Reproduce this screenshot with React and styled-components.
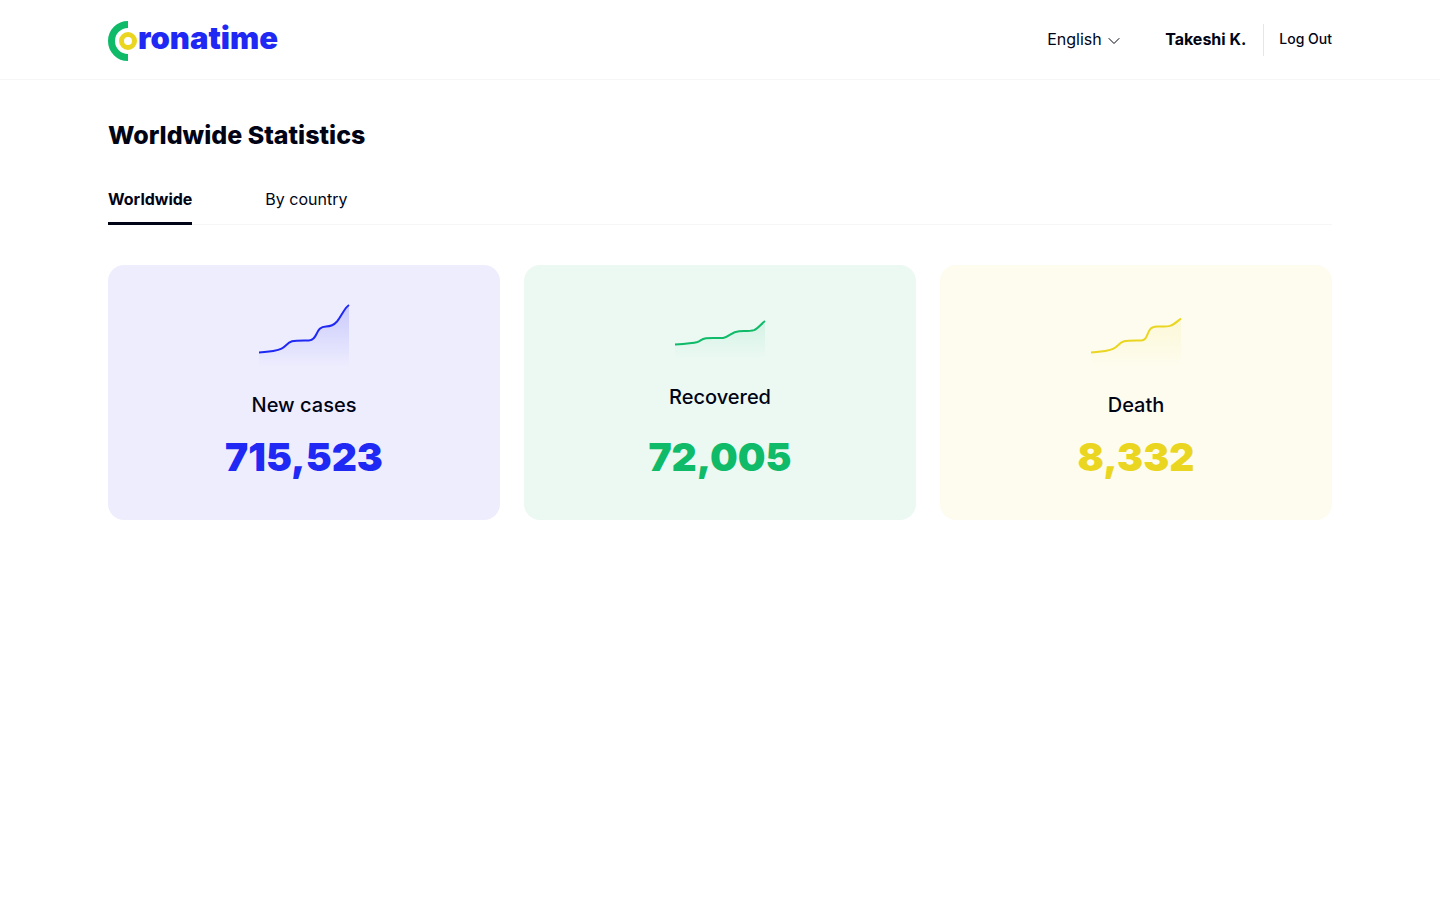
import React from "react";
import styled, { createGlobalStyle } from "styled-components";

const GlobalStyle = createGlobalStyle`
  * { box-sizing: border-box; }
  body {
    margin: 0;
    background: #ffffff;
    color: #010414;
    font-family: Inter, "Liberation Sans", sans-serif;
    font-size: 16px;
    line-height: 20px;
  }
`;

const Header = styled.header`
  display: flex;
  align-items: center;
  justify-content: space-between;
  height: 80px;
  padding: 0 108px;
  border-bottom: 1px solid #f6f6f7;
`;

const LogoLink = styled.a`
  display: flex;
  align-items: center;
  padding-top: 2px;
  color: #2029f3;
  text-decoration: none;
`;

const LogoMark = styled.svg`
  display: block;
  width: 30px;
  height: 40px;
`;

const LogoText = styled.span`
  padding-bottom: 6px;
  font-size: 31px;
  font-weight: 900;
  line-height: 36px;
`;

const Actions = styled.div`
  display: flex;
  align-items: center;
`;

const Language = styled.label`
  display: grid;
  align-items: center;
  margin-right: 44px;
  > * { grid-area: 1 / 1; }
`;

const LanguageSelect = styled.select`
  appearance: none;
  margin: 0;
  padding: 0 19px 2px 0;
  border: 0;
  background: transparent;
  color: inherit;
  font: inherit;
  cursor: pointer;
`;

const Chevron = styled.svg`
  justify-self: end;
  width: 14px;
  height: 8px;
  margin-top: 2px;
  pointer-events: none;
`;

const UserName = styled.span`
  padding: 0 17px 2px 0;
  font-weight: 700;
`;

const LogOut = styled.button`
  height: 32px;
  padding: 0 0 2px 15px;
  border: 0;
  border-left: 1px solid #e6e6e7;
  background: transparent;
  color: inherit;
  font: 500 14px / 20px Inter, "Liberation Sans", sans-serif;
  cursor: pointer;
`;

const Main = styled.main`
  padding: 40px 108px;
`;

const Title = styled.h1`
  margin: 0 0 39px;
  font-size: 25px;
  font-weight: 800;
  line-height: 30px;
`;

const Tabs = styled.nav`
  display: flex;
  gap: 73px;
  margin-bottom: 40px;
  box-shadow: inset 0 -1px #f6f6f7;
`;

const Tab = styled.a`
  height: 36px;
  border-bottom: 3px solid ${(p) => (p.$active ? "#010414" : "transparent")};
  color: inherit;
  font-weight: ${(p) => (p.$active ? 700 : 400)};
  text-decoration: none;
`;

const Cards = styled.section`
  display: grid;
  grid-template-columns: repeat(3, 1fr);
  gap: 24px;
`;

const Card = styled.article`
  display: flex;
  flex-direction: column;
  align-items: center;
  padding: 40px;
  border-radius: 16px;
  background: ${(p) => p.$background};
`;

const Chart = styled.svg`
  display: block;
  width: 90px;
  height: ${(p) => p.$height}px;
  margin-bottom: 24px;
  overflow: visible;
`;

const CardLabel = styled.h2`
  margin: 0;
  font-size: 20px;
  font-weight: 500;
  line-height: 24px;
`;

const CardValue = styled.strong`
  margin-top: auto;
  padding-top: 16px;
  color: ${(p) => p.$color};
  font-size: 39px;
  font-weight: 900;
  line-height: 47px;
`;

const stats = [
  {
    id: "new",
    label: "New cases",
    value: "715,523",
    color: "#2029f3",
    background: "#eeedfe",
    height: 64,
    base: 62,
    line: "M0 47.5C8 47 18 46 22.5 43.7C27 41.3 28 38 33 36.3C38 35.2 45 35.6 50 35.4C59 35.4 56 21.5 67 21.4C72 21.4 74.5 20.5 78 16.5C83 10.5 85 3.5 90 0",
  },
  {
    id: "recovered",
    label: "Recovered",
    value: "72,005",
    color: "#0fba68",
    background: "#ecf9f3",
    height: 56,
    base: 54,
    line: "M0 39.5C8 39 18 38.3 22.5 37C26 35.8 26 34 31 33.3C37 32.8 43 33.4 48 32.9C55 31.9 56 26.7 64 26.2C69 25.9 75 26.3 79 25.1C83 23.5 86 19 90 16",
  },
  {
    id: "death",
    label: "Death",
    value: "8,332",
    color: "#ead621",
    background: "#fefcee",
    height: 64,
    base: 62,
    line: "M0 47.5C8 47 18 46 22.5 43.7C27 41.3 28 38 33 36.3C38 35.2 45 35.6 50 35.4C59 35.4 54 21.5 66 21.4C71 21.3 75 21.9 79 20.9C83 19.7 86 16.5 90 13.5",
  },
];

function StatCard({ id, label, value, color, background, height, base, line }) {
  return (
    <Card $background={background}>
      <Chart $height={height} viewBox={`0 0 90 ${height}`} aria-hidden="true">
        <defs>
          <linearGradient id={`fade-${id}`} x1="0" y1="0" x2="0" y2="1">
            <stop offset="0" stopColor={color} stopOpacity={id === "new" ? 0.18 : 0.11} />
            <stop offset="1" stopColor={color} stopOpacity="0" />
          </linearGradient>
        </defs>
        <path d={`${line}V${base}H0Z`} fill={`url(#fade-${id})`} />
        <path d={line} fill="none" stroke={color} strokeWidth="2" />
      </Chart>
      <CardLabel>{label}</CardLabel>
      <CardValue $color={color}>{value}</CardValue>
    </Card>
  );
}

export default function App() {
  return (
    <>
      <GlobalStyle />
      <Header>
        <LogoLink href="#" aria-label="Coronatime">
          <LogoMark viewBox="0 0 30 40" aria-hidden="true">
            <path d="M20 3.5A16.5 16.5 0 0 0 20 36.5" fill="none" stroke="#0fba68" strokeWidth="7" />
            <circle cx="20" cy="20" r="6.5" fill="none" stroke="#ead621" strokeWidth="5" />
          </LogoMark>
          <LogoText>ronatime</LogoText>
        </LogoLink>
        <Actions>
          <Language>
            <LanguageSelect aria-label="Language" defaultValue="en">
              <option value="en">English</option>
            </LanguageSelect>
            <Chevron viewBox="0 0 14 8" aria-hidden="true">
              <path d="M2 1.5L7 6.5L12 1.5" fill="none" stroke="#010414" strokeWidth="1" strokeLinecap="round" strokeLinejoin="round" />
            </Chevron>
          </Language>
          <UserName>Takeshi K.</UserName>
          <LogOut type="button">Log Out</LogOut>
        </Actions>
      </Header>
      <Main>
        <Title>Worldwide Statistics</Title>
        <Tabs aria-label="Statistics view">
          <Tab href="#worldwide" $active aria-current="page">Worldwide</Tab>
          <Tab href="#countries">By country</Tab>
        </Tabs>
        <Cards>
          {stats.map((stat) => (
            <StatCard key={stat.id} {...stat} />
          ))}
        </Cards>
      </Main>
    </>
  );
}
